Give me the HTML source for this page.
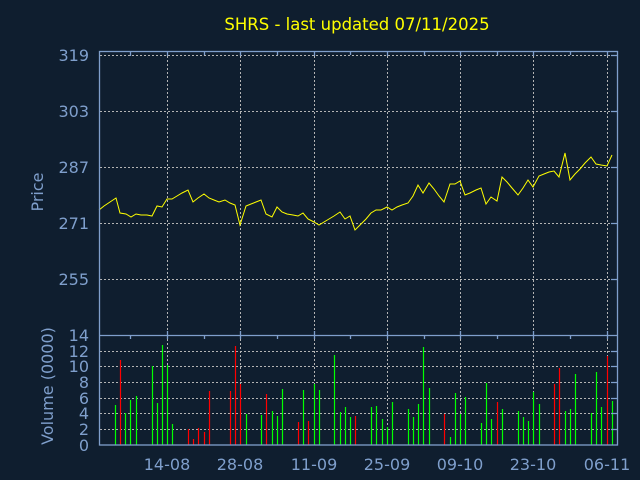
<!DOCTYPE html><html><head><style>body{margin:0;background:#0f1e2f}svg{display:block}</style></head><body>
<svg width="640" height="480" xmlns="http://www.w3.org/2000/svg" font-family="'DejaVu Sans','Liberation Sans',sans-serif">
<rect width="640" height="480" fill="#0f1e2f"/>
<text x="357" y="30" fill="#ffff00" font-size="16.5" text-anchor="middle">SHRS - last updated 07/11/2025</text>
<g stroke="#b4b4b4" stroke-dasharray="2,2" stroke-width="1">
<path d="M100 55.5H617M100 111.5H617M100 167.5H617M100 223.5H617M100 279.5H617"/>
<path d="M100 351.5H617M100 366.5H617M100 382.5H617M100 398.5H617M100 413.5H617M100 429.5H617"/>
<path d="M167.5 52V335M240.5 52V335M314.5 52V335M387.5 52V335M460.5 52V335M533.5 52V335M607.5 52V335"/>
<path d="M167.5 335V445M240.5 335V445M314.5 335V445M387.5 335V445M460.5 335V445M533.5 335V445M607.5 335V445"/>
</g>
<g stroke-width="1.2">
<path stroke="#00ff00" d="M115.5 445V405M125.5 445V413M130.5 445V400M136.5 445V396M152.5 445V366M157.5 445V403M162.5 445V345M167.5 445V365M172.5 445V424M246.5 445V414M261.5 445V415M272.5 445V411M277.5 445V416M282.5 445V389M303.5 445V390M314.5 445V384M319.5 445V390M334.5 445V355M340.5 445V412M345.5 445V407M350.5 445V417M371.5 445V407M376.5 445V406M382.5 445V419M387.5 445V427M392.5 445V402M408.5 445V409M413.5 445V417M418.5 445V404M423.5 445V347M429.5 445V388M450.5 445V437M455.5 445V393M460.5 445V414M465.5 445V397M481.5 445V423M486.5 445V383M491.5 445V419M502.5 445V409M518.5 445V411M523.5 445V417M528.5 445V421M533.5 445V392M539.5 445V404M565.5 445V411M570.5 445V409M575.5 445V374M591.5 445V413M596.5 445V372M601.5 445V407M612.5 445V401"/>
<path stroke="#ff0000" d="M120.5 445V360M188.5 445V429M193.5 445V439M198.5 445V428M204.5 445V432M209.5 445V391M230.5 445V391M235.5 445V346M240.5 445V384M266.5 445V394M298.5 445V422M308.5 445V421M355.5 445V416M444.5 445V414M497.5 445V402M554.5 445V384M559.5 445V368M607.5 445V356"/>
</g>
<polyline fill="none" stroke="#ffff00" stroke-width="1" points="99,210 104,206 110,202 116,198 120,213 126,214 131,217 136,214 141,215 147,215 152,216 157,206 162,207 167,199 172,199 177,196 182,193 188,190 193,202 198,198 204,194 209,198 214,200 219,202 225,200 230,203 235,205 240,225 246,206 251,204 256,202 261,200 266,214 272,217 277,207 282,212 287,214 293,215 298,216 303,213 308,219 314,222 319,225 324,222 329,219 334,216 340,212 345,219 350,216 355,230 360,225 366,219 371,213 376,210 381,210 387,207 392,210 397,207 402,205 408,203 413,196 418,185 423,193 429,183 434,189 439,196 444,202 450,184 455,184 460,181 465,195 470,193 476,190 481,188 486,204 491,197 497,201 502,177 507,182 512,188 518,195 523,188 528,180 533,187 539,176 544,174 549,172 554,171 559,177 565,153 570,180 575,174 580,169 585,163 591,157 596,164 601,165 607,166 612,155"/>
<g stroke="#7f9fcc" fill="none" stroke-width="1.3">
<rect x="99.5" y="51.5" width="518" height="393.5"/>
<path d="M99.5 335.5H617.5"/>
<path d="M130.5 52v4M167.5 52v4M204.5 52v3M240.5 52v4M277.5 52v3M314.5 52v4M350.5 52v3M387.5 52v4M424.5 52v3M460.5 52v4M497.5 52v3M533.5 52v4M570.5 52v3M607.5 52v4"/>
<path d="M130.5 335v4M167.5 331v8M204.5 335v4M240.5 331v8M277.5 335v4M314.5 331v8M350.5 335v4M387.5 331v8M424.5 335v4M460.5 331v8M497.5 335v4M533.5 331v8M570.5 335v4M607.5 331v8"/>
<path d="M611 55.5h6M611 111.5h6M611 167.5h6M611 223.5h6M611 279.5h6M611 351.5h6M611 366.5h6M611 382.5h6M611 398.5h6M611 413.5h6M611 429.5h6"/>
</g>
<g fill="#7f9fcc" font-size="16" text-anchor="end">
<text x="89" y="61">319</text><text x="89" y="117">303</text><text x="89" y="173">287</text><text x="89" y="229">271</text><text x="89" y="285">255</text><text x="89" y="341">14</text>
<text x="89" y="357">12</text><text x="89" y="372">10</text><text x="89" y="388">8</text><text x="89" y="404">6</text><text x="89" y="419">4</text><text x="89" y="435">2</text><text x="89" y="451">0</text>
</g>
<g fill="#7f9fcc" font-size="16" text-anchor="middle">
<text x="167" y="470">14-08</text><text x="240" y="470">28-08</text><text x="314" y="470">11-09</text><text x="387" y="470">25-09</text><text x="460" y="470">09-10</text><text x="533" y="470">23-10</text><text x="607" y="470">06-11</text>
<text transform="translate(43,192) rotate(-90)">Price</text>
<text transform="translate(53,386) rotate(-90)">Volume (0000)</text>
</g>
</svg>
</body></html>
